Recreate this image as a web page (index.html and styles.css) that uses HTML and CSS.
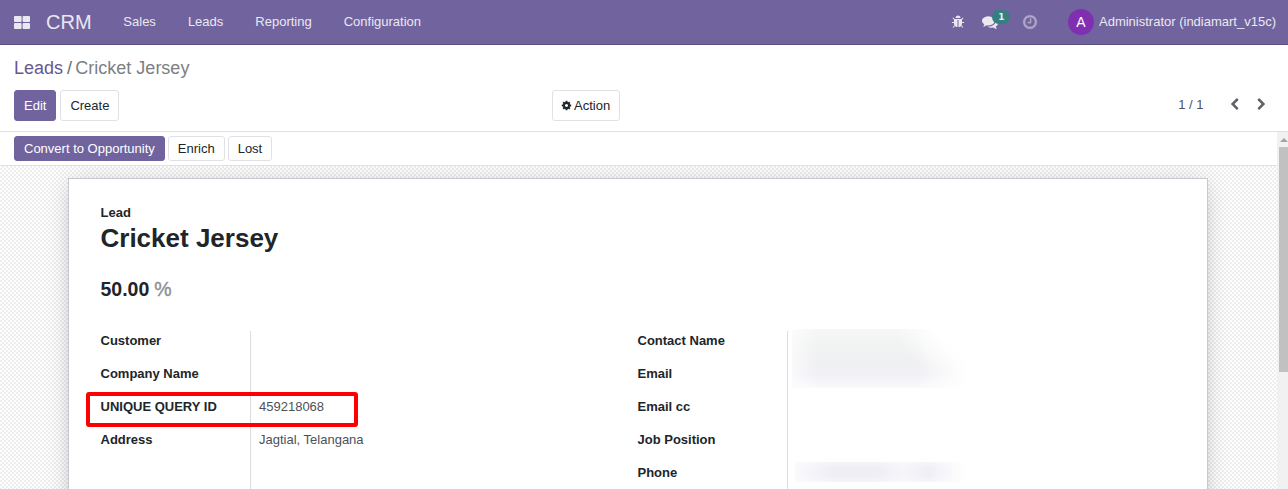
FILE: index.html
```html
<!DOCTYPE html>
<html lang="en">
<head>
<meta charset="utf-8">
<title>Cricket Jersey - CRM</title>
<link rel="stylesheet" href="styles.css">
</head>
<body>
<header class="navbar">
  <svg class="apps" viewBox="0 0 16 13"><rect width="7.6" height="6" rx="1"/><rect x="8.6" width="7.4" height="6" rx="1"/><rect y="7" width="7.6" height="6" rx="1"/><rect x="8.6" y="7" width="7.4" height="6" rx="1"/></svg>
  <span class="brand">CRM</span>
  <nav class="menu"><a>Sales</a><a>Leads</a><a>Reporting</a><a>Configuration</a></nav>
  <div class="systray">
    <svg class="bug" viewBox="0 0 1792 1792"><path d="M1696 960q0 26-19 45t-45 19h-224q0 171-67 290l208 209q19 19 19 45t-19 45q-18 19-45 19t-45-19l-198-197q-5 5-15 13t-42 28.500-65 36.500-82 29-97 13v-896h-128v896q-51 0-101.500-13.500t-87-33-66-39-43.500-32.500l-15-14-183 207q-20 21-48 21-24 0-43-16-19-18-20.500-44.500t15.500-46.500l202-227q-58-114-58-274h-224q-26 0-45-19t-19-45 19-45 45-19h224v-294l-173-173q-19-19-19-45t19-45 45-19 45 19l173 173h844l173-173q19-19 45-19t45 19 19 45-19 45l-173 173v294h224q26 0 45 19t19 45zm-480-576h-640q0-133 93.500-226.500t226.500-93.500 226.500 93.500 93.500 226.500z"/></svg>
    <div class="messages">
      <svg class="chat" viewBox="0 0 1792 1792"><path d="M1408 768q0 139-94 257t-256.500 186.500-353.500 68.500q-86 0-176-16-124 88-278 128-36 9-86 16h-3q-11 0-20.500-8t-11.500-21q-1-3-1-6.500t.5-6.500 2-6l2.500-5 3.500-5.500 4-5 4.500-5 4-4.500q5-6 23-25t26-29.500 22.500-29 25-38.500 20.500-44q-124-72-195-177t-71-224q0-139 94-257t256.500-186.500 353.500-68.500 353.500 68.500 256.500 186.500 94 257zm384 256q0 120-71 224.500t-195 176.500q10 24 20.500 44t25 38.500 22.500 29 26 29.500 23 25q1 1 4 4.500t4.500 5 4 5 3.500 5.500l2.500 5 2 6 .5 6.500-1 6.500q-3 14-13 22t-22 7q-50-7-86-16-154-40-278-128-90 16-176 16-271 0-472-132 58 4 88 4 161 0 309-45t264-129q125-92 192-212t67-254q0-77-23-152 129 71 204 178t75 230z"/></svg>
      <span class="badge">1</span>
    </div>
    <svg class="clock" viewBox="0 0 1792 1792"><path d="M1024 544v448q0 14-9 23t-23 9h-320q-14 0-23-9t-9-23v-64q0-14 9-23t23-9h224v-352q0-14 9-23t23-9h64q14 0 23 9t9 23zm416 352q0-148-73-273t-198-198-273-73-273 73-198 198-73 273 73 273 198 198 273 73 273-73 198-198 73-273zm224 0q0 209-103 385.500t-279.500 279.500-385.500 103-385.500-103-279.500-279.500-103-385.500 103-385.500 279.500-279.500 385.500-103 385.500 103 279.500 279.500 103 385.500z"/></svg>
    <span class="avatar">A</span>
    <span class="user">Administrator (indiamart_v15c)</span>
  </div>
</header>

<section class="control-panel">
  <div class="breadcrumb"><a>Leads</a><span class="slash">/</span><span>Cricket Jersey</span></div>
  <div class="controls">
    <div class="buttons"><button class="btn primary">Edit</button><button class="btn">Create</button></div>
    <button class="btn action"><svg class="cog" viewBox="0 0 1792 1792"><path d="M1152 896q0-106-75-181t-181-75-181 75-75 181 75 181 181 75 181-75 75-181zm512-109v222q0 12-8 23t-20 13l-185 28q-19 54-39 91 35 50 107 138 10 12 10 25t-9 23q-27 37-99 108t-94 71q-12 0-26-9l-138-108q-44 23-91 38-16 136-29 186-7 28-36 28h-222q-14 0-24.500-8.500t-11.500-21.500l-28-184q-49-16-90-37l-141 107q-10 9-25 9-14 0-25-11-126-114-165-168-7-10-7-23 0-12 8-23 15-21 51-66.500t54-70.500q-27-50-41-99l-183-27q-13-2-21-12.500t-8-23.500v-222q0-12 8-23t19-13l186-28q14-46 39-92-40-57-107-138-10-12-10-24 0-10 9-23 26-36 98.500-107.500t94.500-71.500q13 0 26 10l138 107q44-23 91-38 16-136 29-186 7-28 36-28h222q14 0 24.500 8.500t11.500 21.500l28 184q49 16 90 37l142-107q9-9 24-9 13 0 25 10 129 119 165 170 7 8 7 22 0 12-8 23-15 21-51 66.500t-54 70.500q26 50 41 98l183 28q13 2 21 12.500t8 23.500z"/></svg>Action</button>
    <div class="pager">
      <span>1 / 1</span>
      <svg class="chevron" viewBox="0 0 1792 1792"><path d="M1427 301l-531 531 531 531q19 19 19 45t-19 45l-166 166q-19 19-45 19t-45-19l-742-742q-19-19-19-45t19-45l742-742q19-19 45-19t45 19l166 166q19 19 19 45t-19 45z"/></svg>
      <svg class="chevron" viewBox="0 0 1792 1792"><path d="M1363 877l-742 742q-19 19-45 19t-45-19l-166-166q-19-19-19-45t19-45l531-531-531-531q-19-19-19-45t19-45l166-166q19-19 45-19t45 19l742 742q19 19 19 45t-19 45z"/></svg>
    </div>
  </div>
</section>

<div class="content">
  <main class="form-view">
    <div class="statusbar"><button class="btn primary small">Convert to Opportunity</button><button class="btn small">Enrich</button><button class="btn small">Lost</button></div>
    <div class="sheet-bg">
      <article class="sheet">
        <div class="title-label">Lead</div>
        <h1>Cricket Jersey</h1>
        <div class="probability"><b>50.00</b> <span>%</span></div>
        <div class="groups">
          <dl class="group">
            <dt>Customer</dt><dd></dd>
            <dt>Company Name</dt><dd></dd>
            <dt class="highlighted">UNIQUE QUERY ID</dt><dd>459218068</dd>
            <dt>Address</dt><dd>Jagtial, Telangana</dd>
            <dt></dt><dd></dd>
          </dl>
          <dl class="group">
            <dt>Contact Name</dt><dd><i class="redacted contact"></i></dd>
            <dt>Email</dt><dd></dd>
            <dt>Email cc</dt><dd></dd>
            <dt>Job Position</dt><dd></dd>
            <dt>Phone</dt><dd><i class="redacted phone"></i></dd>
          </dl>
        </div>
      </article>
    </div>
  </main>
  <div class="scrollbar"><span class="arrow"></span><span class="thumb"></span></div>
</div>
</body>
</html>
```
FILE: styles.css
```css
*, *::after { box-sizing: border-box; }
body {
  margin: 0;
  height: 489px;
  overflow: hidden;
  display: flex;
  flex-direction: column;
  font: 13px/20px "Liberation Sans", Arial, sans-serif;
  color: #212529;
  background: #fff;
}
svg { display: block; fill: currentColor; flex: none; }

.navbar {
  flex: none;
  height: 45px;
  display: flex;
  align-items: center;
  padding: 0 12px 1px 14px;
  background: #71639e;
  border-bottom: 1px solid #5a4f7f;
  color: #eae8f0;
}
.apps { width: 16px; height: 13px; margin-top: 1px; }
.brand { font-size: 20px; margin-left: 16px; }
.menu { display: flex; gap: 32px; margin-left: 31.8px; }
.systray { display: flex; align-items: center; margin-left: auto; }
.bug { width: 14px; height: 14px; margin-right: 17px; }
.messages { position: relative; margin-right: 24px; }
.chat { width: 16px; height: 16px; }
.badge {
  position: absolute;
  left: 10px;
  top: -4px;
  width: 18px;
  height: 14px;
  border-radius: 7px;
  background: #35807f;
  font: bold 9px/14px "DejaVu Sans", sans-serif;
  text-align: center;
}
.clock { width: 16px; height: 16px; opacity: .5; stroke: currentColor; stroke-width: 40; margin-right: 29.5px; }
.avatar {
  width: 26px;
  height: 26px;
  border-radius: 50%;
  background: #7f2fb0;
  color: #fff;
  font-size: 14px;
  line-height: 26px;
  text-align: center;
  margin-right: 5px;
}

.control-panel {
  flex: none;
  height: 87px;
  padding: 10px 14px 0;
  border-bottom: 1px solid #dee2e6;
}
.breadcrumb { font-size: 18px; line-height: 27px; color: #7c7f83; }
.breadcrumb a { color: #66598f; }
.slash { margin: 0 3.3px 0 4px; color: #666b70; }
.controls { display: grid; grid-template-columns: 538px 1fr auto; margin-top: 8px; }
.buttons { display: flex; gap: 4px; }
.btn {
  height: 31px;
  padding: 0 9px;
  border: 1px solid #dee2e6;
  border-radius: 3px;
  background: #fff;
  color: #212529;
  font: inherit;
  white-space: nowrap;
}
.btn.primary { background: #71639e; border-color: #71639e; color: #fff; }
.btn.small { height: 25px; }
.action { display: flex; align-items: center; justify-self: start; }
.cog { width: 11px; height: 11px; margin: 0 2px 0 -1px; }
.pager { display: flex; align-items: center; color: #4c5157; height: 29px; }
.chevron { width: 13px; height: 13px; margin-left: 24px; color: #5f6368; }
.chevron + .chevron { margin: 0 6.5px 0 14px; }

.content { flex: 1; min-height: 0; display: flex; }
.form-view { flex: 1; display: flex; flex-direction: column; min-width: 0; }
.statusbar {
  flex: none;
  height: 34px;
  display: flex;
  align-items: center;
  gap: 3px;
  padding-left: 14px;
  border-bottom: 1px solid #dee2e6;
}
.sheet-bg {
  flex: 1;
  min-height: 0;
  overflow: hidden;
  padding: 12px 69px 0 68px;
  background: conic-gradient(#eee 25%, #fff 0 50%, #eee 0 75%, #fff 0) 0 0 / 4px 4px;
}
.sheet {
  height: 400px;
  padding: 24px 31px;
  background: #fff;
  border: 1px solid #c8c8d3;
  box-shadow: 0 5px 20px -15px rgba(0, 0, 0, .5), 0 2px 22px rgba(0, 0, 0, .13);
}
.title-label { font-weight: bold; padding-left: .5px; }
h1 { margin: 0; padding-left: .5px; font-size: 26px; line-height: 31px; }
.probability { margin-top: 21px; padding-left: .5px; font-size: 19.5px; line-height: 28px; }
.probability span { color: #8f8f8f; -webkit-text-stroke: .4px; margin-left: -.5px; }
.groups { display: grid; grid-template-columns: 537px 537px; margin-top: 28px; }
.group { margin: 0; display: grid; grid-template-columns: 150px 1fr; grid-auto-rows: 33px; }
dt { font-weight: bold; position: relative; padding-left: .5px; }
dd { margin: 0; padding-left: 8px; border-left: 1px solid #ddd; color: #4c5157; position: relative; }
.highlighted::after {
  content: "";
  position: absolute;
  z-index: 1;
  left: -14px;
  top: -5px;
  width: 272px;
  height: 35px;
  border: 4px solid #f00;
  border-radius: 3px;
}
.redacted { position: absolute; }
.contact {
  left: 4px;
  top: -2px;
  width: 174px;
  height: 59px;
  background:
    radial-gradient(ellipse 70px 45px at 100% 0, #fff 35%, transparent),
    linear-gradient(90deg, rgba(255,255,255,.6), transparent 26px 125px, #fff),
    linear-gradient(#f6f7f6, #f1f3f2 25%, #f0f0f2 60%, #f1f0f6 78%, #fafafc);
}
.phone {
  left: 7px;
  top: -1px;
  width: 170px;
  height: 20px;
  background:
    linear-gradient(rgba(255,255,255,.35), transparent 35% 65%, rgba(255,255,255,.35)),
    linear-gradient(90deg, #fafafc, #efeef5 22% 48%, #f6f6f9 64%, #efeef5 78%, #fff);
}

.scrollbar {
  flex: none;
  width: 11px;
  background: #f1f1f1;
  display: flex;
  flex-direction: column;
  align-items: flex-end;
  overflow: hidden;
}
.arrow {
  margin: 6px 0 5px;
  border: 4px solid transparent;
  border-top: 0;
  border-bottom: 4px solid #a3a3a3;
}
.thumb { width: 9px; height: 225px; background: #c1c1c1; }
```
